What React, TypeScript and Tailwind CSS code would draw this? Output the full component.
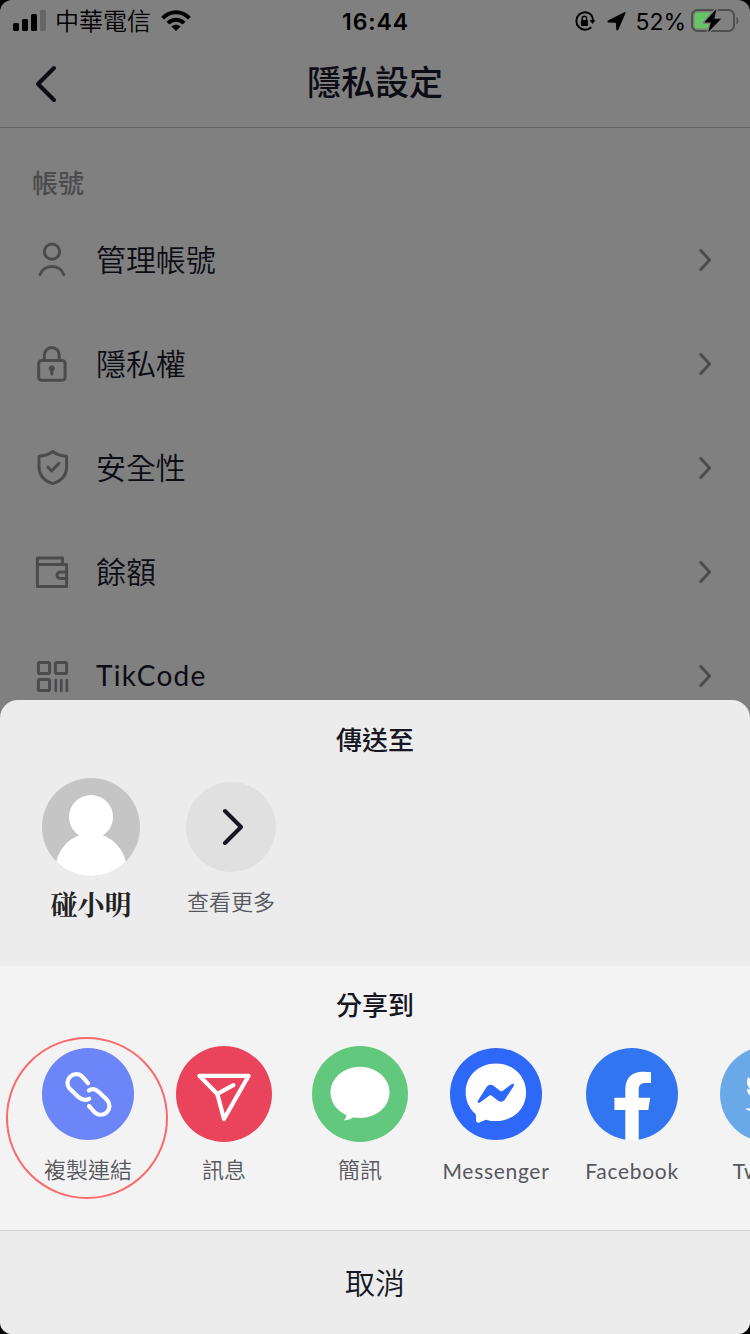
import type { ReactNode } from "react";
import { FaTwitter } from "react-icons/fa";

const stroke = {
  fill: "none",
  stroke: "currentColor",
  strokeLinecap: "round" as const,
  strokeLinejoin: "round" as const,
};

function UserIcon() {
  return (
    <svg width="40" height="40" viewBox="0 0 40 40" strokeWidth="3" {...stroke}>
      <circle cx="20" cy="11.6" r="7.6" />
      <path d="M8 34.6C9.6 29.8 14.2 26.4 19.9 26.4S30.2 29.8 31.8 34.6" />
    </svg>
  );
}

function LockIcon() {
  return (
    <svg width="40" height="40" viewBox="0 0 40 40" strokeWidth="3" {...stroke}>
      <rect x="6.7" y="16.4" width="26.4" height="19.9" rx="3" />
      <path d="M12.4 16.4V10.9a7.4 7.4 0 0 1 14.8 0V16.4" />
      <circle cx="19.8" cy="24.4" r="2.9" fill="currentColor" stroke="none" />
      <path d="M19.8 25V30" />
    </svg>
  );
}

function ShieldIcon() {
  return (
    <svg width="40" height="40" viewBox="0 0 40 40" strokeWidth="3" {...stroke}>
      <path d="M20.8 3.5C17 6.4 12 8 7 8.3V18.6C7 27 12 33 20.8 35.6C29.6 33 34.6 27 34.6 18.6V8.3C29.6 8 24.6 6.4 20.8 3.5Z" />
      <path d="M16 19.2L19.6 22.9L27 15.4" />
    </svg>
  );
}

function WalletIcon() {
  return (
    <svg width="40" height="40" viewBox="0 0 40 40" strokeWidth="3" {...stroke}>
      <path d="M30.6 12.4V6.1H5.4V34.4H34.6V12.4H5.4" />
      <path d="M34.6 20H28.2a3.2 3.2 0 0 0 0 6.4H34.6" />
    </svg>
  );
}

function CodeIcon() {
  return (
    <svg width="40" height="40" viewBox="0 0 40 40" strokeWidth="3" {...stroke}>
      <rect x="6.4" y="6.4" width="11.2" height="11.2" rx="1.6" />
      <rect x="23.4" y="6.4" width="11.2" height="11.2" rx="1.6" />
      <rect x="6.4" y="23.4" width="11.2" height="11.2" rx="1.6" />
      <path d="M23.8 24V35M29.3 24V35M34.9 24V35" strokeWidth="2.7" />
    </svg>
  );
}

function LinkIcon() {
  return (
    <svg width="96" height="96" viewBox="0 0 96 96">
      <circle cx="48" cy="48" r="46" fill="#6c85f8" />
      <g strokeWidth="4.2" {...stroke}>
        <path d="M48 37.2L41.7 30A8.8 8.8 0 0 0 29.3 42.3L38.6 51.2Q43.8 55.6 49.2 52.8" />
        <path d="M49 60L55 66.7A8.8 8.8 0 0 0 67.4 54.3L58.6 45.8Q53.5 41.4 48.8 44.4" />
      </g>
    </svg>
  );
}

function SendIcon() {
  return (
    <svg width="96" height="96" viewBox="0 0 96 96">
      <circle cx="48" cy="48" r="48" fill="#e9445c" />
      <path d="M57.4 39.2L41.3 47.9L23.4 29.8H72.6L48 73L41.3 47.9" strokeWidth="4.2" {...stroke} />
    </svg>
  );
}

function SmsIcon() {
  return (
    <svg width="96" height="96" viewBox="0 0 96 96">
      <circle cx="48" cy="48" r="48" fill="#62c87e" />
      <g fill="white">
        <ellipse cx="48" cy="46.4" rx="29.6" ry="25.6" />
        <path d="M33.5 66C35.3 69.3 34.2 72 31.8 74.6C36.2 74.2 39.8 72.8 42.5 70.5Z" />
      </g>
    </svg>
  );
}

function MessengerIcon() {
  return (
    <svg width="96" height="96" viewBox="0 0 96 96">
      <circle cx="48" cy="48" r="46" fill="#2e68f8" />
      <path
        fill="white"
        d="M47.9 17.6C30.7 17.6 17.7 30 17.7 46.4C17.7 54.9 21.2 62.3 27 67.4C27.6 67.9 27.9 68.6 27.9 69.3L28.1 74.6C28.2 76.3 29.8 77.2 31.3 76.6L37.2 74C37.7 73.8 38.3 73.8 38.8 73.9C41.6 74.7 44.7 75.1 47.9 75.1C65.1 75.1 78.1 62.8 78.1 46.4C78.1 30 65.1 17.6 47.9 17.6Z"
      />
      <path
        fill="#2e68f8"
        d="M29.9 54.8L38.6 41C40.2 38.6 43.2 38 45.5 39.7L52.4 44.9C53 45.4 53.8 45.4 54.5 44.9L63.8 38C65 37 66.7 38.4 65.9 39.8L57 53.5C55.6 55.8 52.5 56.4 50.2 54.7L43.4 49.6C42.8 49.1 42 49.1 41.4 49.6L32 56.6C30.7 57.5 29.1 56.1 29.9 54.8Z"
      />
    </svg>
  );
}

function FacebookIcon() {
  return (
    <svg width="96" height="96" viewBox="0 0 96 96">
      <circle cx="48" cy="48" r="46" fill="#3175f1" />
      <path
        fill="white"
        d="M41.3 94V64H30.4V51.7H41.3V44C41.3 32 48 25.8 58.5 25.8C62 25.8 65 26 67 26.4V36.9H61.5C56.5 36.9 54.7 39.5 54.7 43.5V51.7H66.2L64.3 64H54.7V94Z"
      />
    </svg>
  );
}

function TwitterIcon() {
  return (
    <div className="flex size-24 items-center justify-center rounded-full bg-[#6aa9e8]">
      <FaTwitter size={46} />
    </div>
  );
}

const settings = [
  { label: "管理帳號", icon: <UserIcon /> },
  { label: "隱私權", icon: <LockIcon /> },
  { label: "安全性", icon: <ShieldIcon /> },
  { label: "餘額", icon: <WalletIcon /> },
  { label: "TikCode", icon: <CodeIcon />, latin: true },
];

const targets = [
  { label: "複製連結", icon: <LinkIcon />, marked: true },
  { label: "訊息", icon: <SendIcon /> },
  { label: "簡訊", icon: <SmsIcon /> },
  { label: "Messenger", icon: <MessengerIcon />, latin: true },
  { label: "Facebook", icon: <FacebookIcon />, latin: true },
  { label: "Twitter", icon: <TwitterIcon />, latin: true },
];

function StatusBar() {
  return (
    <div className="grid h-10 grid-cols-3 items-center pr-[11px] pl-[13px] font-['Inter','Noto_Sans_CJK_TC',sans-serif] text-black">
      <div className="flex items-center">
        <svg width="33" height="22" viewBox="0 0 33 22">
          <rect y="13" width="6" height="8" rx="1.5" />
          <rect x="9" y="9" width="6" height="12" rx="1.5" />
          <rect x="18" y="4" width="6" height="17" rx="1.5" />
          <rect x="27" width="6" height="21" rx="1.5" fill="#656565" />
        </svg>
        <span className="ml-[9px] pt-0.5 text-2xl leading-10 font-[350]">中華電信</span>
        <svg className="ml-[10px]" width="30" height="22" viewBox="0 0 30 22">
          <g fill="none" stroke="black" strokeWidth="4">
            <path d="M1.6 8.2C9.2 0.2 20.8 0.2 28.4 8.2" />
            <path d="M6.9 13.2C11.4 8.5 18.6 8.5 23.1 13.2" />
          </g>
          <path d="M10.4 16.4C13 14.1 17 14.1 19.6 16.4L15 21Z" />
        </svg>
      </div>
      <span className="pt-px pr-px text-center text-[23px] leading-10 font-semibold tracking-[0.9px]">16:44</span>
      <div className="flex items-center justify-end">
        <svg width="22" height="22" viewBox="0 0 22 22">
          <path d="M17.6 5.2A8.7 8.7 0 1 0 17.2 17.2" fill="none" stroke="black" strokeWidth="2" />
          <path d="M17.3 5C18.5 6.8 19 8.5 19 10.6" fill="none" stroke="black" strokeWidth="2" />
          <path d="M15.6 10H21.4L18.5 14Z" />
          <rect x="6.9" y="10" width="7" height="6" rx="0.8" />
          <path d="M8.2 10.4V8.4a2.2 2.2 0 0 1 4.4 0V10.4" fill="none" stroke="black" strokeWidth="1.4" />
        </svg>
        <svg className="ml-[11px]" width="20" height="20" viewBox="0 0 20 20">
          <path d="M17.4 1.2L1 9.6C0 10.2.2 11.3 1.4 11.4L8.2 11.7C8.7 11.7 8.9 11.9 8.9 12.4L9.3 18.4C9.4 19.6 10.8 19.8 11.3 18.7L18.5 2.2C18.8 1.4 18.2.8 17.4 1.2Z" />
        </svg>
        <span className="ml-[8px] pt-px text-[23px] leading-10">52%</span>
        <svg className="ml-[5px]" width="48" height="26" viewBox="0 0 48 26">
          <rect x="1" y="2" width="42" height="21" rx="5.5" fill="none" stroke="#4f4f4f" strokeWidth="2" />
          <path d="M45.5 9V16.5C48 15.5 48 10 45.5 9Z" fill="#4f4f4f" />
          <rect x="3.5" y="4.5" width="18" height="16" rx="3" fill="#65c466" />
          <path
            d="M25.5 .8L13.2 14.4H19.8L17.2 24.2L30.2 10.8H23.4Z"
            stroke="#808080"
            strokeWidth="3"
            strokeLinejoin="round"
            paintOrder="stroke"
          />
        </svg>
      </div>
    </div>
  );
}

function SettingRow({ label, icon, latin }: { label: string; icon: ReactNode; latin?: boolean }) {
  return (
    <li className="flex h-[104px] items-center pr-[37px] pl-8">
      <span className="text-[#4b4b4d]">{icon}</span>
      <span
        className={
          latin
            ? "ml-6 flex-1 pb-0.5 text-[28px] leading-10 tracking-[1.3px] text-[#0c0c14]"
            : "ml-6 flex-1 pb-[3px] text-[30px] leading-10 font-[350] tracking-[-0.1px] text-[#0c0c14]"
        }
      >
        {label}
      </span>
      <svg className="text-[#4b4b4d]" width="14" height="26" viewBox="0 0 14 26" strokeWidth="2.8" {...stroke}>
        <path d="M1.8 3.5L10.6 13L1.8 22.5" />
      </svg>
    </li>
  );
}

export default function App() {
  return (
    <div className="h-[1334px] w-[750px] overflow-hidden bg-black font-['Lato','Noto_Sans_CJK_TC',sans-serif]">
      <div className="flex h-full flex-col overflow-hidden rounded-[12px] bg-[#808080]">
        <StatusBar />
        <header className="flex h-[88px] items-center border-b border-[#636363] pl-[34px] text-[#0c0c14]">
          <svg width="24" height="38" viewBox="0 0 24 38" strokeWidth="4" {...stroke}>
            <path d="M20 3L4 19L20 35" />
          </svg>
          <h1 className="mr-[58px] flex-1 pb-[3px] text-center text-[34px] leading-10 font-medium">隱私設定</h1>
        </header>
        <h2 className="h-20 shrink-0 pt-[35px] pl-8 text-[26px] leading-10 font-medium text-[#4b4b4d]">帳號</h2>
        <ul className="h-[492px] shrink-0">
          {settings.map((s) => (
            <SettingRow key={s.label} label={s.label} icon={s.icon} latin={s.latin} />
          ))}
        </ul>

        <div className="relative flex h-[634px] shrink-0 flex-col overflow-hidden rounded-t-[18px] bg-[#ececed]">
          <section className="h-[266px] pt-5">
            <h3 className="text-center text-[26px] leading-10 font-medium text-[#161722]">傳送至</h3>
            <div className="mt-[18px] flex">
              <div className="ml-[21px] flex w-[140px] flex-col items-center">
                <svg width="98" height="98" viewBox="0 0 98 98">
                  <clipPath id="avatar">
                    <circle cx="49" cy="49" r="49" />
                  </clipPath>
                  <g clipPath="url(#avatar)">
                    <rect width="98" height="98" fill="#c5c5c5" />
                    <circle cx="49" cy="39" r="22" fill="white" />
                    <ellipse cx="49" cy="93" rx="36" ry="38" fill="white" />
                  </g>
                </svg>
                <span className="mt-2 font-['Noto_Serif_CJK_TC','Noto_Sans_CJK_TC',serif] text-[27px] leading-10 font-bold text-[#222]">
                  碰小明
                </span>
              </div>
              <div className="flex w-[140px] flex-col items-center pt-1">
                <div className="flex size-[90px] items-center justify-center rounded-full bg-[#e0e0e1] text-[#161722]">
                  <svg width="24" height="38" viewBox="0 0 24 38" strokeWidth="4" {...stroke}>
                    <path d="M6 3L22 19L6 35" />
                  </svg>
                </div>
                <span className="mt-[10px] text-[22px] leading-10 font-[350] text-[#57575e]">查看更多</span>
              </div>
            </div>
          </section>

          <section className="h-[264px] bg-[#f3f3f4] pt-[19px]">
            <h3 className="text-center text-[26px] leading-10 font-medium text-[#161722]">分享到</h3>
            <ul className="mt-[21px] ml-5 flex">
              {targets.map((t) => (
                <li key={t.label} className="relative flex w-[136px] shrink-0 flex-col items-center text-white">
                  {t.icon}
                  <span
                    className={
                      t.latin
                        ? "mt-2 pt-px text-[21px] leading-10 tracking-[0.7px] text-[#57575e]"
                        : "mt-2 text-[22px] leading-10 font-[350] text-[#57575e]"
                    }
                  >
                    {t.label}
                  </span>
                  {t.marked && (
                    <span className="absolute top-[-9px] left-[-14px] size-[162px] rounded-full border-2 border-[#fb6a6a]" />
                  )}
                </li>
              ))}
            </ul>
          </section>

          <button className="h-[104px] border-t border-[#d0d0d2] text-[30px] leading-[101px] font-[350] text-[#161722]">
            取消
          </button>
        </div>
      </div>
    </div>
  );
}
